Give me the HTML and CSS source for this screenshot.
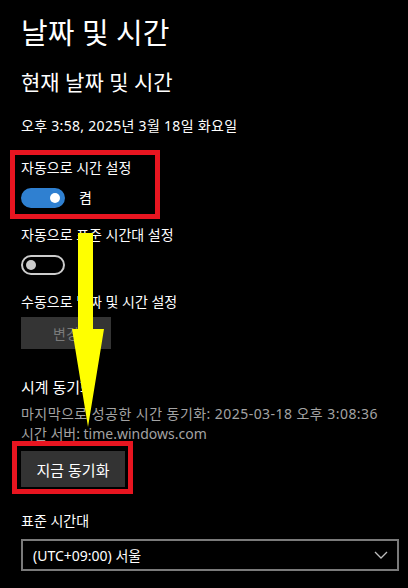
FILE: index.html
```html
<!DOCTYPE html>
<html lang="ko">
<head>
  <meta charset="UTF-8" />
  <meta name="viewport" content="width=device-width, initial-scale=1.0"/>
  <title>날짜 및 시간</title>
  <link rel="stylesheet" href="styles.css">
</head>
<body>
  <div class="page">
    <h1 class="title">날짜 및 시간</h1>
    <h2 class="subtitle">현재 날짜 및 시간</h2>
    <p class="now">오후 3:58, 2025년 3월 18일 화요일</p>

    <div class="label first">자동으로 시간 설정</div>
    <div class="switch-row">
      <span class="switch on"></span>
      <span>켬</span>
    </div>

    <div class="label">자동으로 표준 시간대 설정</div>
    <div class="switch-row">
      <span class="switch"></span>
      <span>끔</span>
    </div>

    <div class="label">수동으로 날짜 및 시간 설정</div>
    <button class="btn disabled">변경</button>

    <div class="label sync-title">시계 동기화</div>
    <div class="sync-info">
      <div class="last-sync">마지막으로 성공한 시간 동기화: 2025-03-18 오후 3:08:36</div>
      <div>시간 서버: time.windows.com</div>
    </div>
    <button class="btn sync-now">지금 동기화</button>

    <div class="label zone-title">표준 시간대</div>
    <div class="select">
      <span>(UTC+09:00) 서울</span>
      <svg width="14" height="8" viewBox="0 0 14 8"><polyline points="1,1 7,7 13,1" fill="none" stroke="#bdbdbd" stroke-width="1.3"/></svg>
    </div>

    <!-- 강조 표시 -->
    <div class="mark mark-auto"></div>
    <div class="mark mark-sync"></div>
    <svg class="arrow" width="408" height="588" viewBox="0 0 408 588">
      <polygon points="78,233 93,233 93,329 104,329 88,427 72,329 78,329" fill="#ffff00"/>
    </svg>
  </div>
</body>
</html>
```

FILE: styles.css
```css
body {
  margin: 0;
  background-color: #000000;
  color: #ffffff;
  font-family: "Noto Sans", "Noto Sans CJK KR", sans-serif;
}

.page {
  position: relative;
  width: 408px;
  height: 588px;
  overflow: hidden;
  box-sizing: border-box;
  padding: 15px 9px 0 21px;
}

.title {
  margin: 0;
  font-size: 29px;
  font-weight: 400;
  line-height: 36px;
}

.subtitle {
  margin: 17px 0 0;
  font-size: 21px;
  font-weight: 400;
  line-height: 28px;
}

.now {
  margin: 20px 0 0;
  font-size: 14px;
  line-height: 20px;
  letter-spacing: 0.3px;
}

.label {
  margin-top: 17px;
  font-size: 14px;
  line-height: 20px;
}

.label.first {
  margin-top: 22px;
}

.switch-row {
  display: flex;
  align-items: center;
  gap: 14px;
  margin-top: 10px;
  font-size: 14px;
  line-height: 20px;
}

.switch {
  position: relative;
  width: 44px;
  height: 20px;
  box-sizing: border-box;
  border: 2px solid #cccccc;
  border-radius: 10px;
}

.switch::after {
  content: "";
  position: absolute;
  top: 3px;
  left: 3px;
  width: 10px;
  height: 10px;
  border-radius: 50%;
  background-color: #cccccc;
}

.switch.on {
  background-color: #2f80d1;
  border-color: #2f80d1;
}

.switch.on::after {
  left: auto;
  right: 3px;
  background-color: #ffffff;
}

.btn {
  display: block;
  margin-top: 5px;
  border: none;
  background-color: #333333;
  color: #ffffff;
  font-family: inherit;
  font-size: 14px;
  padding: 0;
}

.btn.disabled {
  width: 90px;
  height: 32px;
  color: #7a7a7a;
  background-color: #343434;
}

.sync-title {
  margin-top: 28px;
  font-size: 15px;
}

.sync-info {
  margin-top: 7px;
  font-size: 14px;
  line-height: 20px;
  color: #a3a3a3;
}

.last-sync {
  letter-spacing: 0.45px;
}

.btn.sync-now {
  margin-top: 7px;
  width: 104px;
  height: 36px;
  font-size: 15px;
}

.zone-title {
  margin-top: 24px;
}

.select {
  display: flex;
  justify-content: space-between;
  align-items: center;
  margin-top: 8px;
  height: 32px;
  box-sizing: border-box;
  border: 2px solid #7a7a7a;
  padding: 0 9px 0 10px;
  font-size: 14px;
}

.mark {
  position: absolute;
  border: 5px solid #e81520;
  box-sizing: border-box;
}

.mark-auto {
  left: 10px;
  top: 150px;
  width: 150px;
  height: 69px;
}

.mark-sync {
  left: 12px;
  top: 441px;
  width: 121px;
  height: 53px;
}

.arrow {
  position: absolute;
  left: 0;
  top: 0;
  pointer-events: none;
}
```
